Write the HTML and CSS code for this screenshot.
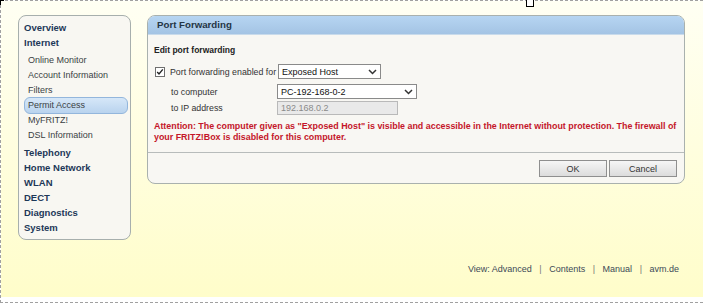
FILE: index.html
```html
<!DOCTYPE html>
<html lang="en">
<head>
    <meta charset="UTF-8">
    <title>FRITZ!Box - Port Forwarding</title>
    <link rel="stylesheet" href="styles.css">
</head>
<body>
    <div class="frame">
        <span class="corner"></span>
        <span class="handle"></span>
        <div class="page">
            <div class="layout">
                <div class="menu">
                    <div class="menu-main">Overview</div>
                    <div class="menu-main">Internet</div>
                    <div class="submenu">
                        <div class="menu-sub">Online Monitor</div>
                        <div class="menu-sub">Account Information</div>
                        <div class="menu-sub">Filters</div>
                        <div class="menu-sub active">Permit Access</div>
                        <div class="menu-sub">MyFRITZ!</div>
                        <div class="menu-sub">DSL Information</div>
                    </div>
                    <div class="menu-main">Telephony</div>
                    <div class="menu-main">Home Network</div>
                    <div class="menu-main">WLAN</div>
                    <div class="menu-main">DECT</div>
                    <div class="menu-main">Diagnostics</div>
                    <div class="menu-main">System</div>
                </div>

                <div class="panel">
                    <div class="panel-head">Port Forwarding</div>
                    <div class="panel-body">
                        <div class="section-title">Edit port forwarding</div>
                        <div class="row row-first">
                            <svg class="check" width="10" height="10" viewBox="0 0 10 10">
                                <rect x="0.5" y="0.5" width="9" height="9" fill="#fff" stroke="#6f6f6f"/>
                                <path d="M2.2 5 L4 7 L7.8 2.4" fill="none" stroke="#222" stroke-width="1.4"/>
                            </svg>
                            <span class="check-label">Port forwarding enabled for</span>
                            <div class="select sel-type">
                                <span>Exposed Host</span>
                                <svg width="9" height="6" viewBox="0 0 9 6"><path d="M1 1 L4.5 4.5 L8 1" fill="none" stroke="#333" stroke-width="1.5"/></svg>
                            </div>
                        </div>
                        <div class="row row-second">
                            <span class="label">to computer</span>
                            <div class="select sel-pc">
                                <span>PC-192-168-0-2</span>
                                <svg width="9" height="6" viewBox="0 0 9 6"><path d="M1 1 L4.5 4.5 L8 1" fill="none" stroke="#333" stroke-width="1.5"/></svg>
                            </div>
                        </div>
                        <div class="row row-third">
                            <span class="label">to IP address</span>
                            <div class="input-disabled">192.168.0.2</div>
                        </div>
                        <p class="warning">Attention: The computer given as "Exposed Host" is visible and accessible in the Internet without protection. The firewall of your FRITZ!Box is disabled for this computer.</p>
                    </div>
                    <div class="panel-foot">
                        <button class="btn">OK</button>
                        <button class="btn">Cancel</button>
                    </div>
                </div>
            </div>

            <div class="footer">
                <span>View: Advanced</span>
                <span class="sep">|</span>
                <span>Contents</span>
                <span class="sep">|</span>
                <span>Manual</span>
                <span class="sep">|</span>
                <span>avm.de</span>
            </div>
        </div>
    </div>
</body>
</html>
```

FILE: styles.css
```css
body { margin: 0; font-family: "Liberation Sans", Arial, sans-serif; background: #fff; overflow: hidden; }

.frame { position: relative; height: 301px; border-top: 1px dashed #a0a0a0; border-left: 1px dashed #a0a0a0; border-bottom: 1px dashed #a0a0a0; }
.corner { position: absolute; left: -1px; top: -1px; width: 3px; height: 4px; border-left: 1px solid #000; border-top: 1px solid #000; }
.handle { position: absolute; left: 525px; top: -2px; width: 6px; height: 6px; border: 1px solid #000; background: #fff; }

.page { height: 296px; display: flex; flex-direction: column; background: linear-gradient(#fffff3, #fffdca); }
.layout { display: flex; align-items: flex-start; gap: 16px; padding: 14px 0 0 17px; }

/* left navigation */
.menu { width: 113px; height: 225px; box-sizing: border-box; padding: 4px 2px 0 5px; background: #f8f7f2; border: 1px solid #a7afad; border-radius: 8px; }
.menu-main { height: 15px; line-height: 15px; font-size: 9.5px; font-weight: bold; color: #1d3858; }
.submenu { margin: 3px 0 2px; }
.menu-sub { height: 15px; line-height: 15px; font-size: 9px; color: #3a3f44; padding-left: 4px; }
.menu-sub.active { box-sizing: border-box; height: 17px; margin: -1px 0; padding-left: 3px; border: 1px solid #93b6dc; border-radius: 6px; background: linear-gradient(#d6e7f8, #b9d3ee); }

/* content panel */
.panel { width: 538px; box-sizing: border-box; background: #f8f7f3; border: 1px solid #a9b1ae; border-radius: 8px; overflow: hidden; }
.panel-head { height: 18px; line-height: 18px; padding-left: 9px; font-size: 9.7px; font-weight: bold; color: #253545; background: linear-gradient(#b6d5f2, #a4c4e4); border-bottom: 1px solid #c9dbeb; }
.panel-body { padding: 8px 6px 9px 6px; border-bottom: 1px solid #b8bcbb; }
.section-title { height: 14px; line-height: 14px; font-size: 8.5px; font-weight: bold; color: #222; }

.row { display: flex; align-items: center; height: 15px; font-size: 8.8px; color: #333; }
.row-first { margin-top: 7px; }
.row-second { margin-top: 5px; }
.row-third { margin-top: 2px; height: 14px; }
.check { margin: 0 5px 0 1px; }
.check-label { width: 108px; }
.label { width: 106px; padding-left: 17px; }

.select { display: flex; justify-content: space-between; align-items: center; height: 15px; box-sizing: border-box; padding: 0 3px 0 3px; background: #fff; border: 1px solid #8a8a8a; font-size: 9px; color: #111; }
.sel-type { width: 103px; }
.sel-pc { width: 140px; }
.input-disabled { width: 121px; height: 14px; line-height: 12px; box-sizing: border-box; padding-left: 3px; background: #e9e9e9; border: 1px solid #b9b9b9; font-size: 9px; color: #8a8a8a; }

.warning { margin: 6px 0 0; width: 524px; font-size: 8.9px; line-height: 11px; font-weight: bold; color: #c4162a; }

.panel-foot { display: flex; justify-content: flex-end; gap: 2px; padding: 7px 7px 6px 0; }
.btn { width: 68px; height: 17px; padding: 0; font-family: inherit; font-size: 9px; color: #333; background: linear-gradient(#f6f6f6, #dcdcdc); border: 1px solid #8f8f8f; }

/* footer links */
.footer { margin-top: auto; padding: 0 24px 20px 0; text-align: right; font-size: 9px; line-height: 15px; color: #3d4a57; }
.footer .sep { margin: 0 5px; color: #777; }
```
